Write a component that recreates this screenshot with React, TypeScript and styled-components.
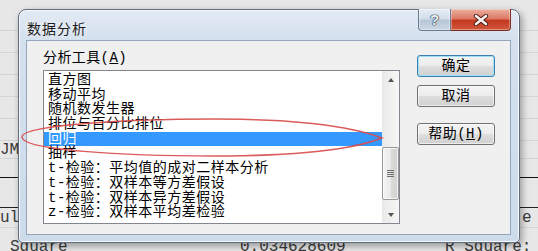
import React from 'react'
import styled, { createGlobalStyle } from 'styled-components'

const GlobalStyle = createGlobalStyle`
  html, body {
    margin: 0;
    padding: 0;
    background: #e7e7e7;
  }
  body {
    font-family: "Noto Sans CJK SC", sans-serif;
  }
`

const CJK = `"Liberation Mono", "Noto Sans CJK SC", monospace`

const tools = [
  '直方图',
  '移动平均',
  '随机数发生器',
  '排位与百分比排位',
  '回归',
  '抽样',
  't-检验：平均值的成对二样本分析',
  't-检验：双样本等方差假设',
  't-检验：双样本异方差假设',
  'z-检验：双样本平均差检验',
]

// spreadsheet behind the dialog
const Sheet = styled.div`
  position: relative;
  width: 538px;
  height: 251px;
  overflow: hidden;
  background: #e7e7e7;
  font-family: "Liberation Mono", "Courier New", monospace;
  font-size: 16px;
  color: #3a3a3a;
`

const SheetRow = styled.div<{ $h: number; $line?: string; $pad?: number }>`
  height: ${p => p.$h}px;
  box-sizing: border-box;
  display: flex;
  align-items: flex-start;
  padding-top: ${p => p.$pad ?? 0}px;
  border-bottom: 1px solid ${p => p.$line ?? '#d4d4d4'};
  white-space: pre;
  line-height: 16px;
`

const Cell = styled.div<{ $w?: number; $indent?: number; $lift?: number }>`
  width: ${p => (p.$w ? `${p.$w}px` : 'auto')};
  flex: ${p => (p.$w ? 'none' : '1')};
  padding-left: ${p => p.$indent ?? 0}px;
  margin-top: ${p => -(p.$lift ?? 0)}px;
  box-sizing: border-box;
`

// dialog window
const Window = styled.div`
  position: absolute;
  left: 18px;
  top: 9px;
  width: 502px;
  height: 234px;
  box-sizing: border-box;
  padding: 0 8px 7px 7px;
  display: flex;
  flex-direction: column;
  border: 1px solid #5f6d7e;
  border-radius: 8px 8px 5px 5px;
  background: linear-gradient(180deg, #e2eaf4 0px, #d4e0ee 30px, #cddbeb 100%);
  box-shadow: inset 0 0 0 1px rgba(255, 255, 255, 0.75), 2px 3px 7px rgba(0, 0, 0, 0.35);
`

const TitleBar = styled.div`
  height: 30px;
  display: flex;
  justify-content: space-between;
  align-items: flex-start;
`

const Title = styled.div`
  padding: 9px 0 0 1px;
  font: 14px/18px "Noto Sans CJK SC", sans-serif;
  letter-spacing: 1px;
  color: #1b1b1b;
  text-shadow: 0 0 6px rgba(255, 255, 255, 0.9);
`

const CaptionGroup = styled.div`
  display: flex;
  margin-top: -1px;
`

const CaptionButton = styled.div<{ $close?: boolean }>`
  width: ${p => (p.$close ? 60 : 33)}px;
  height: 22px;
  box-sizing: border-box;
  display: flex;
  align-items: center;
  justify-content: center;
  border: 1px solid ${p => (p.$close ? '#7b2b20' : '#6b7a8c')};
  border-top: none;
  ${p => (p.$close ? 'border-left: none;' : '')}
  border-radius: ${p => (p.$close ? '0 0 4px 0' : '0 0 0 4px')};
  background: ${p =>
    p.$close
      ? 'linear-gradient(180deg, #ebb0a2 0%, #dc7b66 45%, #c4391f 55%, #d0573c 100%)'
      : 'linear-gradient(180deg, #e6edf5 0%, #d3deea 45%, #b8c7d8 55%, #c9d6e4 100%)'};
  box-shadow: inset 0 0 0 1px rgba(255, 255, 255, 0.35);
`

const HelpGlyph = styled.span`
  font: bold 15px/1 "Liberation Sans", sans-serif;
  color: #eef1f5;
  text-shadow: 0 0 1px #2c3b4c, 0 0 1px #2c3b4c, 0 0 1px #2c3b4c, 0 0 1px #2c3b4c;
`

const Client = styled.div`
  flex: 1;
  display: flex;
  gap: 17px;
  padding: 7px 0 0 16px;
  background: #f0f0f0;
  border: 1px solid #93a6bd;
`

const LeftColumn = styled.div`
  width: 357px;
  display: flex;
  flex-direction: column;
`

const Label = styled.div`
  height: 22px;
  font: 14px/20px ${CJK};
  letter-spacing: 0.4px;
  color: #000;
`

const Mnemonic = styled.span`
  text-decoration: underline;
`

const ListBox = styled.div`
  height: 154px;
  box-sizing: border-box;
  display: flex;
  border: 1px solid #828790;
  background: #fff;
`

const List = styled.div`
  flex: 1;
  padding-top: 2px;
  overflow: hidden;
`

const Item = styled.div<{ $selected?: boolean }>`
  height: 14.7px;
  line-height: 14.7px;
  padding-left: 4px;
  font-family: ${CJK};
  font-size: 14px;
  letter-spacing: 0.5px;
  white-space: nowrap;
  color: ${p => (p.$selected ? '#fff' : '#000')};
  background: ${p => (p.$selected ? '#3399ff' : 'transparent')};
`

const ScrollBar = styled.div`
  width: 17px;
  display: flex;
  flex-direction: column;
  background: linear-gradient(90deg, #e9e9e9, #f6f6f6);
`

const ArrowButton = styled.div<{ $down?: boolean }>`
  height: 17px;
  display: flex;
  align-items: center;
  justify-content: center;

  &::after {
    content: '';
    border-left: 3.5px solid transparent;
    border-right: 3.5px solid transparent;
    ${p => (p.$down ? 'border-top: 4px solid #555;' : 'border-bottom: 4px solid #555;')}
  }
`

const Track = styled.div`
  flex: 1;
  display: flex;
  flex-direction: column;
`

const Thumb = styled.div`
  height: 53px;
  box-sizing: border-box;
  display: flex;
  align-items: center;
  justify-content: center;
  border: 1px solid #989898;
  border-radius: 2px;
  background: linear-gradient(90deg, #f4f4f4 0%, #e9e9e9 50%, #dadada 51%, #d2d2d2 100%);
  box-shadow: inset 0 0 0 1px rgba(255, 255, 255, 0.7);
`

const Grip = styled.div`
  width: 7px;
  height: 8px;
  background: repeating-linear-gradient(180deg, #6d6d6d 0 1px, transparent 1px 2px);
`

const RightColumn = styled.div`
  width: 78px;
  display: flex;
  flex-direction: column;
  gap: 8px;
  padding-top: 7px;
`

const PushButton = styled.button<{ $default?: boolean; $gapAbove?: number }>`
  width: 78px;
  height: 22px;
  margin-top: ${p => p.$gapAbove ?? 0}px;
  box-sizing: border-box;
  padding: 0;
  border: 1px solid ${p => (p.$default ? '#3c7fb1' : '#707070')};
  border-radius: 3px;
  background: linear-gradient(180deg, #f3f3f3 0%, #ececec 50%, #dedede 51%, #d0d0d0 100%);
  box-shadow: inset 0 0 0 1px ${p => (p.$default ? '#9ee0f8' : 'rgba(255, 255, 255, 0.6)')};
  font: 14px/20px ${CJK};
  letter-spacing: 0.5px;
  color: #000;
`

const Annotation = styled.svg`
  position: absolute;
  left: 18px;
  top: 116px;
  pointer-events: none;
`

export default function App() {
  return (
    <>
      <GlobalStyle />
      <Sheet>
        <SheetRow $h={9} $line="#e7e7e7">
          <Cell $w={104} $lift={12} />
          <Cell $w={128} $lift={12}>0.250251755</Cell>
          <Cell $w={110} $lift={12}>0.120625</Cell>
          <Cell $lift={12}>2.07451   0.0450</Cell>
        </SheetRow>
        <SheetRow $h={22} />
        <SheetRow $h={22} />
        <SheetRow $h={22} />
        <SheetRow $h={22} />
        <SheetRow $h={22} />
        <SheetRow $h={22} />
        <SheetRow $h={18} $pad={1}>
          <Cell $w={40}>JM</Cell>
        </SheetRow>
        <SheetRow $h={19} $line="#111" />
        <SheetRow $h={30} $line="#222" />
        <SheetRow $h={20} $pad={2}>
          <Cell $w={40}>ul</Cell>
          <Cell />
          <Cell $w={20} $indent={4}>e</Cell>
        </SheetRow>
        <SheetRow $h={23} $pad={11} $line="#e7e7e7">
          <Cell $w={240} $indent={10}>Square</Cell>
          <Cell $w={205}>0.034628609</Cell>
          <Cell>R Square:</Cell>
        </SheetRow>

        <Window>
          <TitleBar>
            <Title>数据分析</Title>
            <CaptionGroup>
              <CaptionButton>
                <HelpGlyph>?</HelpGlyph>
              </CaptionButton>
              <CaptionButton $close>
                <svg width="16" height="12" viewBox="0 0 16 12">
                  <path d="M3 2 L13 10 M13 2 L3 10" stroke="#4a1a12" strokeWidth="4.4" strokeLinecap="round" />
                  <path d="M3 2 L13 10 M13 2 L3 10" stroke="#f7f1ef" strokeWidth="2.6" strokeLinecap="round" />
                </svg>
              </CaptionButton>
            </CaptionGroup>
          </TitleBar>

          <Client>
            <LeftColumn>
              <Label>
                分析工具(<Mnemonic>A</Mnemonic>)
              </Label>
              <ListBox>
                <List>
                  {tools.map(name => (
                    <Item key={name} $selected={name === '回归'}>
                      {name}
                    </Item>
                  ))}
                </List>
                <ScrollBar>
                  <ArrowButton />
                  <Track>
                    <div style={{ height: 59 }} />
                    <Thumb>
                      <Grip />
                    </Thumb>
                  </Track>
                  <ArrowButton $down />
                </ScrollBar>
              </ListBox>
            </LeftColumn>

            <RightColumn>
              <PushButton $default>确定</PushButton>
              <PushButton>取消</PushButton>
              <PushButton $gapAbove={8}>
                帮助(<Mnemonic>H</Mnemonic>)
              </PushButton>
            </RightColumn>
          </Client>
        </Window>

        <Annotation width="370" height="44" viewBox="0 0 370 44">
          <path
            d="M4 21 C4 9, 110 3, 195 3 C280 3, 335 11, 364 22 C336 33, 282 40, 195 40 C105 40, 4 34, 4 21 Z"
            fill="none"
            stroke="#d84a4a"
            strokeWidth="1.4"
            opacity="0.9"
          />
        </Annotation>
      </Sheet>
    </>
  )
}
